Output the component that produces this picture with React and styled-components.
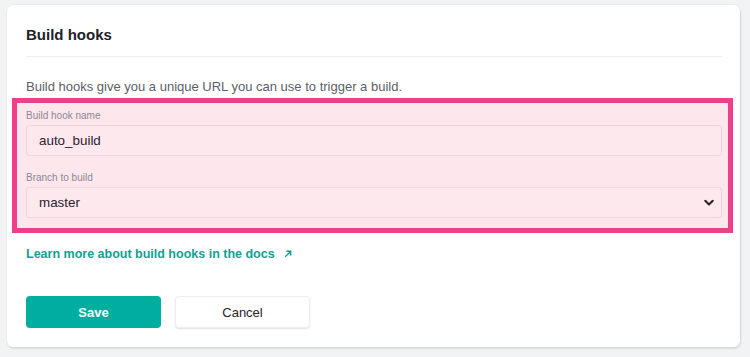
import React from "react";
import styled, { createGlobalStyle } from "styled-components";

const Global = createGlobalStyle`
  html, body { margin: 0; padding: 0; background: #f2f3f5; }
  body { font-family: "Liberation Sans", Arial, sans-serif; -webkit-font-smoothing: antialiased; }
  * { box-sizing: border-box; }
`;

const Page = styled.div`
  padding: 5px 10px 10px 7px;
`;

const Card = styled.section`
  background: #ffffff;
  border-radius: 6px;
  box-shadow: 0 0 0 1px rgba(0, 0, 0, 0.03), 1px 2px 2px rgba(0, 0, 0, 0.09);
  padding: 20px 18px 19px 19px;
  display: flex;
  flex-direction: column;
`;

const Header = styled.div`
  padding-bottom: 11px;
  border-bottom: 1px solid #eceef0;
`;

const Title = styled.h2`
  margin: 0;
  font-size: 15px;
  line-height: 20px;
  font-weight: 700;
  color: #1d2127;
`;

const Description = styled.p`
  margin: 21px 0 2px;
  font-size: 13px;
  line-height: 18px;
  color: #5b6068;
`;

const Highlight = styled.div`
  margin: 0 -11px 0 -14px;
  border: 5px solid #ee3f8a;
  background: #fde7ed;
  padding: 6px 6px 10px 9px;
  display: flex;
  flex-direction: column;
  gap: 15px;
`;

const Field = styled.label`
  display: flex;
  flex-direction: column;
  gap: 2px;
`;

const Label = styled.span`
  font-size: 10px;
  line-height: 14px;
  color: #8c8790;
`;

const Control = styled.div`
  position: relative;
  display: flex;
`;

const TextInput = styled.input`
  width: 100%;
  height: ${(p) => p.$h}px;
  border: 1px solid #efd5dc;
  border-radius: 3px;
  background: #fde8ee;
  padding: 0 12px;
  font-family: "Liberation Sans", Arial, sans-serif;
  font-size: 13.4px;
  color: #2a2330;
  outline: none;
  appearance: none;
`;

const Select = styled(TextInput).attrs({ as: "select" })``;

const Chevron = styled.svg`
  position: absolute;
  right: 8px;
  top: 50%;
  transform: translateY(-50%);
  pointer-events: none;
`;

const LinkRow = styled.a`
  margin-top: 12px;
  display: inline-flex;
  align-items: center;
  gap: 9px;
  align-self: flex-start;
  font-size: 12.5px;
  line-height: 18px;
  font-weight: 700;
  color: #129f91;
  text-decoration: none;
`;

const Actions = styled.div`
  margin-top: 33px;
  display: flex;
  gap: 14px;
`;

const Button = styled.button`
  width: 135px;
  height: 32px;
  border-radius: 4px;
  font-family: "Liberation Sans", Arial, sans-serif;
  font-size: 13px;
  cursor: pointer;
  ${(p) =>
    p.$primary
      ? `
    background: #00ad9f;
    border: none;
    color: #ffffff;
    font-weight: 700;
  `
      : `
    background: #ffffff;
    border: 1px solid #eceef0;
    color: #1f2329;
    font-weight: 400;
    box-shadow: 0 1px 2px rgba(0,0,0,0.12);
  `}
`;

export default function App() {
  return (
    <>
      <Global />
      <Page>
        <Card>
          <Header>
            <Title>Build hooks</Title>
          </Header>
          <Description>
            Build hooks give you a unique URL you can use to trigger a build.
          </Description>
          <Highlight>
            <Field>
              <Label>Build hook name</Label>
              <Control>
                <TextInput $h={31} defaultValue="auto_build" />
              </Control>
            </Field>
            <Field>
              <Label>Branch to build</Label>
              <Control>
                <Select $h={31} defaultValue="master">
                  <option value="master">master</option>
                </Select>
                <Chevron width="10" height="7" viewBox="0 0 10 7">
                  <path d="M1.3 1.3 L5 5 L8.7 1.3" fill="none" stroke="#2b2530" strokeWidth="2.1" strokeLinecap="round" strokeLinejoin="round" />
                </Chevron>
              </Control>
            </Field>
          </Highlight>
          <LinkRow href="#">
            Learn more about build hooks in the docs
            <svg width="8" height="8" viewBox="0 0 8 8">
              <path d="M1.2 6.8 L6.5 1.5 M2.4 1.3 H6.7 V5.6" fill="none" stroke="#129f91" strokeWidth="1.4" />
            </svg>
          </LinkRow>
          <Actions>
            <Button $primary>Save</Button>
            <Button>Cancel</Button>
          </Actions>
        </Card>
      </Page>
    </>
  );
}
